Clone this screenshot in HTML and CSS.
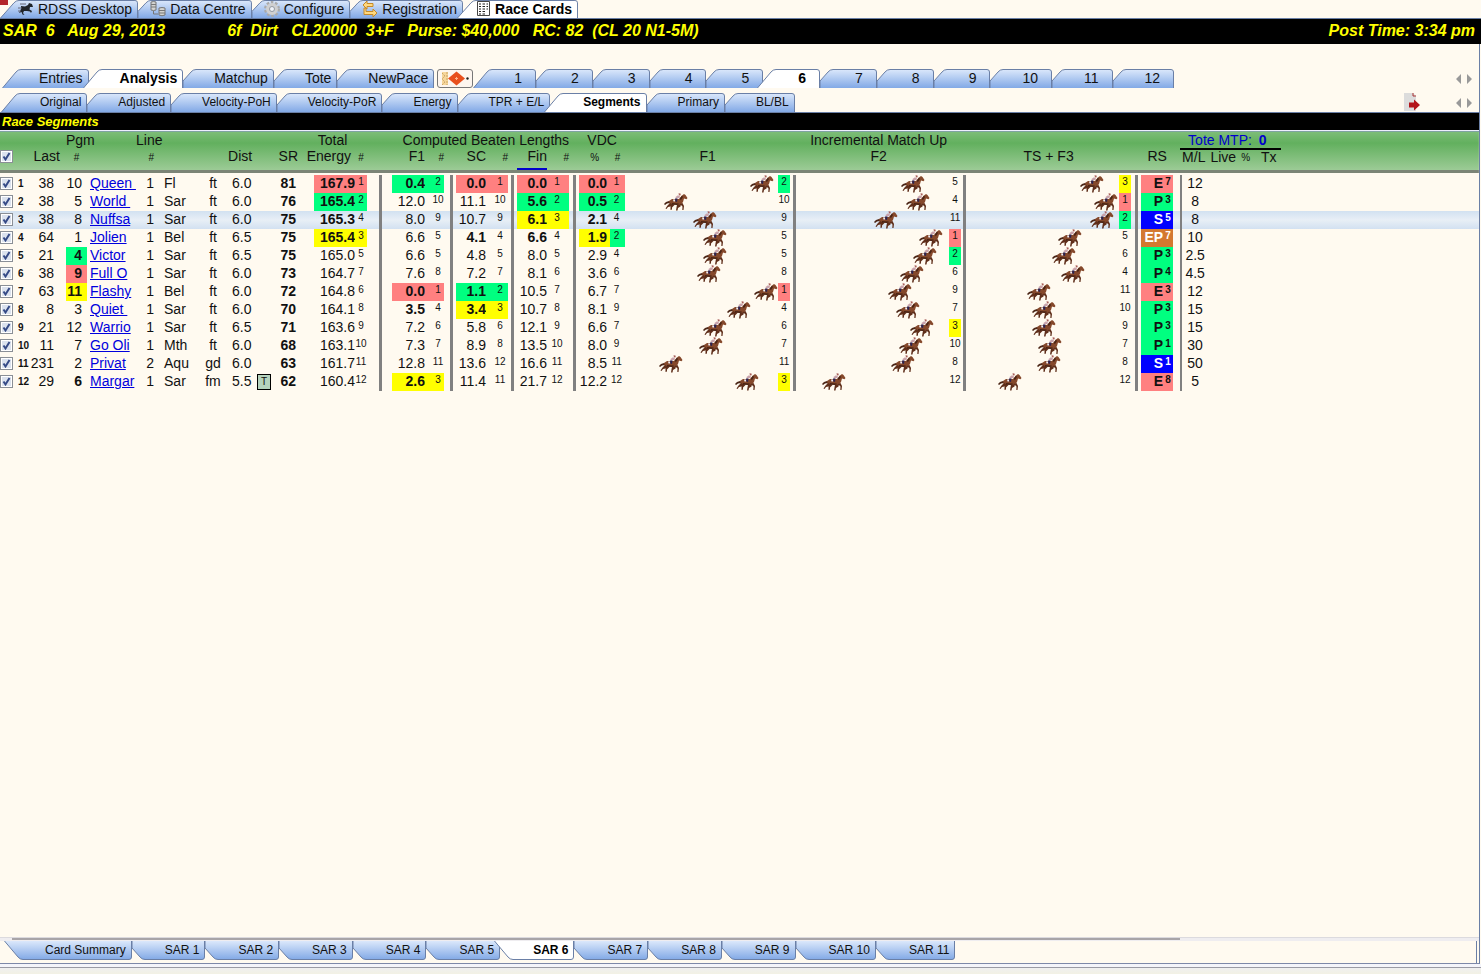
FILE: index.html
```html
<!DOCTYPE html>
<html lang="en">
<head>
  <meta charset="UTF-8" />
  <meta name="viewport" content="width=device-width, initial-scale=1.0"/>
  <title>RDSS - Race Cards</title>
  <link rel="stylesheet" href="styles.css">
</head>
<body>

  <svg class="defs" aria-hidden="true">
    <symbol id="horse" viewBox="0 0 24 18">
      <path d="M0 11 L2 9 L5 8 L7 8 L6 10 L3 10.500 L1 12Z" fill="#4a2415"/>
      <path d="M5 8 L8 6 L15 6 L18 2.500 L20 1 L21.500 2 L23.500 5 L22.500 6.300 L20 5.500 L19 9 L17 11.500 L14 12 L10 11.500 L6 12.500Z" fill="#85482b"/>
      <path d="M6 10 L9 11.500 L6.500 13.500 L4 14 L2.500 16 L1.500 15.500 L3.500 12.500Z M8 11 L11 11.500 L8 14.500 L8 16.500 L6.500 17 L6.500 14Z" fill="#5f2e1a"/>
      <path d="M13 11.500 L17 11 L16.500 13.500 L14 15 L13.500 17.500 L12 17.500 L12.500 14.500Z M16 11 L18.500 10 L20 13 L19.500 17 L18.300 17 L18.500 13.500Z" fill="#5f2e1a"/>
      <path d="M18 2.500 L15.500 6 L17 7 L19 4Z M8 10 L15 10.500 L13 12 L8 11.500Z" fill="#4a2415"/>
      <path d="M11.500 4 L14 2.200 L16 3.500 L15.500 5 L13 5.200 L12 6Z" fill="#c9a3ab"/>
      <path d="M14.500 .3 L16.500 .5 L16.700 2.300 L15 2.500Z" fill="#a9605c"/>
      <path d="M9 6.500 H11 V8.500 H9.500Z" fill="#eeeef8"/>
      <path d="M11 5.500 L13.500 5.500 L13 9 L11.500 8.500Z" fill="#2b2352"/>
    </symbol>
  </svg>

  <div class="frame">
    <nav class="tabs app-tabs">
      <span class="app-mark"></span>
      <button class="tab first">
        <svg width="16" height="16" viewBox="0 0 16 16"><path d="M3 5 L7 5.500 L10 4 L11 2 L14 3 L15 6 L12 6 L11.500 8.500 L14 10 L13 12 L12 10.500 L9 10 L6 10 L5 12 L6.500 14 L4.500 13.500 L3.500 11 L1 12 L3 8Z" fill="#20242a"/><path d="M2 3 H8 M0 7 H4 M0 10 H3" stroke="#667" fill="none"/></svg>
        RDSS Desktop
      </button>
      <button class="tab">
        <svg width="16" height="16" viewBox="0 0 16 16"><path d="M1 1 Q3.500 0 6 1 V9 Q3.500 10 1 9Z M9 7 Q12 6 15 7 V14 Q12 15.500 9 14Z" fill="#d4d4d0" stroke="#777"/><path d="M1 3.500 H6 M1 6 H6 M9 9.500 H15 M9 12 H15 M3.500 10 V13 H8" stroke="#777" fill="none"/></svg>
        Data Centre
      </button>
      <button class="tab">
        <svg width="16" height="16" viewBox="0 0 16 16"><circle cx="8" cy="8" r="6.500" fill="none" stroke="#aaa" stroke-width="3" stroke-dasharray="2.500 1.600"/><circle cx="8" cy="8" r="4.500" fill="none" stroke="#d0d0d0" stroke-width="3"/><circle cx="8" cy="8" r="2.500" fill="#eef3fb" stroke="#999"/></svg>
        Configure
      </button>
      <button class="tab">
        <svg width="16" height="16" viewBox="0 0 16 16"><path d="M1 4 L5 0 V2.500 H11 V5.500 H5 V8Z M15 12 L11 8 V10.500 H4 V7 H2 V13.500 H11 V16Z" fill="#ffd980" stroke="#c58a2a"/></svg>
        Registration
      </button>
      <button class="tab active">
        <svg width="16" height="16" viewBox="0 0 16 16"><path d="M2.500 .5 H14.500 V14.500 H2.500Z" fill="#fff" stroke="#444"/><path d="M4 3 H6 M7.500 3 H10 M11.500 3 H13 M4 5.500 H6 M7.500 5.500 H10 M11.500 5.500 H13 M4 8 H6 M7.500 8 H10 M11.500 8 H13 M4 10.500 H6 M7.500 10.500 H10 M4 13 H6 M7.500 13 H10" stroke="#222" stroke-width="1.200"/></svg>
        Race Cards
      </button>
    </nav>

    <header class="race-bar">
      <span>SAR  6   Aug 29, 2013</span>
      <span class="conditions">6f  Dirt   CL20000  3+F   Purse: $40,000   RC: 82  (CL 20 N1-5M)</span>
      <span class="post">Post Time: 3:34 pm</span>
    </header>

    <main class="card">
      <nav class="tabs race-tabs">
        <button class="tab first">Entries</button>
        <button class="tab active">Analysis</button>
        <button class="tab">Matchup</button>
        <button class="tab">Tote</button>
        <button class="tab">NewPace</button>
        <button class="tool" aria-label="Track bias">
          <svg width="33" height="17" viewBox="0 0 33 17"><path d="M3 2 H9 V15 H3Z" fill="#f6d69a"/><path d="M3 3 L6 6 L3 9 L6 12 L3 15 M8 2 V15" stroke="#c9a366" fill="none" stroke-dasharray="2 1"/><path d="M9 8.500 L17.500 1.500 L26 8.500 L17.500 15.500Z" fill="#e8501e"/><path d="M17.500 7 V10 M16 8.500 H19" stroke="#ffb08a"/><circle cx="28.500" cy="8.500" r="1.200" fill="#222"/></svg>
        </button>
        <button class="tab num first">1</button>
        <button class="tab num">2</button>
        <button class="tab num">3</button>
        <button class="tab num">4</button>
        <button class="tab num">5</button>
        <button class="tab num active">6</button>
        <button class="tab num">7</button>
        <button class="tab num">8</button>
        <button class="tab num">9</button>
        <button class="tab num two">10</button>
        <button class="tab num two">11</button>
        <button class="tab num two">12</button>
        <span class="pager">
          <svg width="16" height="10" viewBox="0 0 16 10"><path d="M5 0 V10 L0 5Z M11 0 V10 L16 5Z" fill="#999"/></svg>
        </span>
      </nav>

      <nav class="tabs view-tabs">
        <button class="tab first">Original</button>
        <button class="tab">Adjusted</button>
        <button class="tab">Velocity-PoH</button>
        <button class="tab">Velocity-PoR</button>
        <button class="tab">Energy</button>
        <button class="tab">TPR + E/L</button>
        <button class="tab active">Segments</button>
        <button class="tab">Primary</button>
        <button class="tab">BL/BL</button>
        <span class="pager">
          <svg width="17" height="19" viewBox="0 0 17 19"><path d="M0 0 H9 L12 3 V18 H0Z" fill="#dcdcdc"/><path d="M9 0 V3 H12" fill="none" stroke="#a33"/><path d="M5 9.500 H10 V6.500 L16 12 L10 17.500 V14.500 H5Z" fill="#b3151b"/></svg>
          <svg width="16" height="10" viewBox="0 0 16 10"><path d="M5 0 V10 L0 5Z M11 0 V10 L16 5Z" fill="#999"/></svg>
        </span>
      </nav>

      <h1>Race Segments</h1>

      <div class="sheet">
        <table>
          <colgroup>
            <col class="w16"><col class="w14"><col class="w24"><col class="w12">
            <col class="w21"><col class="w49"><col class="w18"><col class="w50">
            <col class="w18"><col class="w34"><col class="w16"><col class="w26"><col class="w16">
            <col class="w41"><col class="w12"><col class="w25">
            <col class="w33"><col class="w19"><col class="w12">
            <col class="w30"><col class="w22"><col class="w9">
            <col class="w30"><col class="w22"><col class="w10">
            <col class="w31"><col class="w15">
            <col class="track"><col class="w12"><col class="w6">
            <col class="track"><col class="w12"><col class="w5">
            <col class="track"><col class="w12"><col class="w10">
            <col class="w22"><col class="w10"><col class="w9">
            <col class="w26"><col>
          </colgroup>
          <thead>
            <tr>
              <th colspan="4"></th>
              <th colspan="2" class="left">Pgm</th>
              <th colspan="2" class="left">Line</th>
              <th colspan="4"></th>
              <th colspan="3">Total</th>
              <th colspan="9" class="right">Computed Beaten Lengths</th>
              <th></th>
              <th colspan="2">VDC</th>
              <th colspan="3"></th>
              <th colspan="2">Incremental Match Up</th>
              <th colspan="4"></th>
              <th colspan="2"></th>
              <th colspan="3" rowspan="2" class="tote">
                <div class="mtp">Tote MTP: <b>0</b></div>
                <div class="odds"><span>M/L</span><span>Live</span><small>%</small><span>Tx</span></div>
              </th>
            </tr>
            <tr>
              <th class="left"><input type="checkbox" aria-label="Select all" checked></th>
              <th colspan="3" class="right last">Last</th>
              <th><small>#</small></th>
              <th></th>
              <th class="right"><small>#</small></th>
              <th colspan="2"></th>
              <th colspan="2" class="left dist">Dist</th>
              <th class="right">SR</th>
              <th colspan="2" class="right energy">Energy</th>
              <th><small>#</small></th>
              <th></th>
              <th class="right">F1</th>
              <th class="right"><small>#</small></th>
              <th></th>
              <th class="right">SC</th>
              <th class="right"><small>#</small></th>
              <th></th>
              <th class="right sorted">Fin</th>
              <th class="right"><small>#</small></th>
              <th></th>
              <th><small>%</small></th>
              <th><small>#</small></th>
              <th colspan="2">F1</th>
              <th></th>
              <th colspan="2">F2</th>
              <th></th>
              <th colspan="2">TS + F3</th>
              <th></th>
              <th colspan="2">RS</th>
            </tr>
          </thead>
          <tbody id="rows"></tbody>
        </table>
      </div>

      <div class="scroll"><span></span></div>

      <nav class="tabs card-tabs">
        <button class="tab first">Card Summary</button>
        <button class="tab">SAR 1</button>
        <button class="tab">SAR 2</button>
        <button class="tab">SAR 3</button>
        <button class="tab">SAR 4</button>
        <button class="tab">SAR 5</button>
        <button class="tab active">SAR 6</button>
        <button class="tab">SAR 7</button>
        <button class="tab">SAR 8</button>
        <button class="tab">SAR 9</button>
        <button class="tab">SAR 10</button>
        <button class="tab">SAR 11</button>
      </nav>
    </main>
  </div>
  <footer></footer>

  <script src="script.js"></script>
</body>
</html>
```
FILE: styles.css
```css
* {
  box-sizing: border-box;
}

body {
  margin: 0;
  min-height: 100vh;
  display: flex;
  flex-direction: column;
  background: #fffaf0;
  font-family: "Liberation Sans", Arial, sans-serif;
  font-size: 14px;
  color: #111;
}

.defs {
  display: none;
}

.frame {
  flex: 1;
  display: flex;
  flex-direction: column;
}

/* tabs */
.tabs {
  display: flex;
  height: 19px;
}

.tab {
  height: 19px;
  margin: 0;
  padding: 0 2px 0 17px;
  background: none;
  border: solid transparent;
  border-width: 0 4px 0 14px;
  border-image: url("data:image/svg+xml,%3Csvg xmlns='http://www.w3.org/2000/svg' width='30' height='19'%3E%3ClinearGradient id='g' x2='0' y2='1'%3E%3Cstop stop-color='%23dbe8fb'/%3E%3Cstop offset='1' stop-color='%2382a9e6'/%3E%3C/linearGradient%3E%3Cpath d='M0 19V12L8 3Q10 .5 13 .5H27Q29.500 .5 29.500 3V19' fill='url(%23g)' stroke='%236a7fa6'/%3E%3C/svg%3E") 0 4 0 14 fill;
  font: inherit;
  line-height: 19px;
  color: #111;
  white-space: nowrap;
  cursor: pointer;
}

.tab.first {
  border-left-width: 20px;
  border-image: url("data:image/svg+xml,%3Csvg xmlns='http://www.w3.org/2000/svg' width='36' height='19'%3E%3ClinearGradient id='g' x2='0' y2='1'%3E%3Cstop stop-color='%23dbe8fb'/%3E%3Cstop offset='1' stop-color='%2382a9e6'/%3E%3C/linearGradient%3E%3Cpath d='M.5 19L14 3Q16 .5 19 .5H33Q35.500 .5 35.500 3V19' fill='url(%23g)' stroke='%236a7fa6'/%3E%3C/svg%3E") 0 4 0 20 fill;
}

.tab.active {
  margin-left: -6px;
  border-left-width: 20px;
  border-image: url("data:image/svg+xml,%3Csvg xmlns='http://www.w3.org/2000/svg' width='36' height='19'%3E%3Cpath d='M.5 19L14 3Q16 .5 19 .5H33Q35.500 .5 35.500 3V19' fill='white' stroke='%236a7fa6'/%3E%3C/svg%3E") 0 4 0 20 fill;
  font-weight: bold;
  color: #000;
  z-index: 1;
}

.app-tabs {
  border-bottom: 1px solid #6a7fa6;
  overflow: hidden;
}

.app-tabs .tab {
  display: flex;
  align-items: center;
  gap: 4px;
  height: 18px;
  padding: 0 2px 0 0;
  line-height: 17px;
}

.app-tabs .tab svg {
  flex: none;
  margin-left: -2px;
}

.app-mark {
  width: 8px;
  height: 5px;
  margin-right: -8px;
  background: #b3252b;
}

.race-bar {
  display: flex;
  height: 25px;
  padding: 0 6px 0 3px;
  background: #000;
  color: #ff0;
  font-size: 16px;
  font-weight: bold;
  font-style: italic;
  line-height: 23px;
  white-space: pre;
}

.conditions {
  margin-left: 62px;
}

.post {
  margin-left: auto;
}

.card {
  flex: 1;
  display: flex;
  flex-direction: column;
  padding-top: 25px;
  margin-right: 1px;
  border-right: 1px solid #6a7fa6;
  border-bottom: 1px solid #7d88a8;
}

.race-tabs {
  padding-left: 2px;
}

.tab.num {
  padding: 0 10px 0 21px;
}

.tab.two {
  padding-left: 18px;
}

.tool {
  width: 36px;
  height: 19px;
  margin: 0 0 0 3px;
  padding: 0;
  border: 1px solid #777;
  border-radius: 3px;
  background: #fdf6ef;
  line-height: 0;
}

.pager {
  display: flex;
  align-items: center;
  gap: 35px;
  margin-left: auto;
  padding-right: 7px;
}

.view-tabs {
  height: 20px;
  margin-top: 5px;
  padding-left: 1px;
  border-bottom: 1px solid #6a7fa6;
}

.view-tabs .tab {
  padding: 0 2px 0 17px;
  font-size: 12px;
}

.view-tabs .tab.first,
.view-tabs .tab.active {
  padding-left: 19px;
}

h1 {
  margin: 0;
  padding-left: 2px;
  background: #000;
  color: #ff0;
  font-size: 13px;
  font-style: italic;
  line-height: 17px;
  border-bottom: 1px solid #eef;
}

/* segment table */
.sheet {
  flex: 1;
  border-top: 1px solid #7fa3a0;
}

table {
  width: 100%;
  table-layout: fixed;
  border-spacing: 0;
}

.w5 { width: 5px; }
.w6 { width: 6px; }
.w9 { width: 9px; }
.w10 { width: 10px; }
.w12 { width: 12px; }
.w14 { width: 14px; }
.w15 { width: 15px; }
.w16 { width: 16px; }
.w18 { width: 18px; }
.w19 { width: 19px; }
.w21 { width: 21px; }
.w22 { width: 22px; }
.w24 { width: 24px; }
.w25 { width: 25px; }
.w26 { width: 26px; }
.w30 { width: 30px; }
.w31 { width: 31px; }
.w33 { width: 33px; }
.w34 { width: 34px; }
.w41 { width: 41px; }
.w49 { width: 49px; }
.w50 { width: 50px; }
.track { width: 153px; }

thead {
  background: linear-gradient(#7dbd78 0, #62b05e 11px, #9ccb96 38px, #7b8476 38px, #7b8476 41px, transparent 41px);
}

th {
  height: 16px;
  padding: 0;
  font-weight: normal;
  line-height: 16px;
  vertical-align: top;
  white-space: nowrap;
}

thead tr + tr th {
  height: 27px;
}

td {
  position: relative;
  height: 18px;
  padding: 0;
  line-height: 17px;
  white-space: nowrap;
  vertical-align: top;
}

small {
  font-size: 10px;
}

.left {
  text-align: left;
}

.right {
  text-align: right;
}

.center {
  text-align: center;
}

th.last {
  padding-right: 6px;
}

th.dist {
  padding-left: 6px;
}

th.energy {
  padding-right: 4px;
}

th.sorted {
  background: linear-gradient(#00c, #00c) no-repeat 0 20px / 100% 2px;
}

th.tote {
  padding-left: 7px;
  text-align: left;
}

.mtp {
  width: 101px;
  padding-left: 8px;
  border-bottom: 2px solid #000;
  color: #00c;
  line-height: 16px;
}

.mtp b {
  margin-left: 3px;
}

.odds {
  display: flex;
  gap: 5px;
  padding-left: 2px;
  line-height: 15px;
}

.odds span:last-child {
  margin-left: 6px;
}

input[type="checkbox"] {
  display: block;
  appearance: none;
  width: 13px;
  height: 13px;
  margin: 2px 0 0;
  border: 1px solid #8a8f96;
  background: #e3e7ee;
  box-shadow: inset 0 0 0 1px #fff;
}

input[type="checkbox"]:checked {
  background: #dbe2ee url("data:image/svg+xml,%3Csvg xmlns='http://www.w3.org/2000/svg' width='11' height='11'%3E%3Cpath d='M2.500 5.500L4.500 8.500L8.500 2' fill='none' stroke='%23354a86' stroke-width='2'/%3E%3C/svg%3E");
}

tr.current {
  background: linear-gradient(#d2e1f1, #e8eff6 50%, #d2e1f1);
}

.n {
  padding-left: 2px;
  font-size: 10px;
  font-weight: bold;
}

.pgm {
  padding-right: 5px;
}

.name {
  padding-left: 3px;
}

.name a {
  color: #00d;
  white-space: pre;
}

.trk, .dist {
  padding-left: 10px;
}

.sr {
  padding-right: 2px;
  font-weight: bold;
}

.turf {
  display: block;
  width: 14px;
  height: 16px;
  margin: 1px;
  border: 1px solid #000;
  background: #b5d3bd;
  font-size: 10px;
  line-height: 14px;
  text-align: center;
}

.rank {
  font-size: 10px;
  line-height: 14px;
  text-align: center;
}

.f1-rank {
  padding-left: 7px;
}

.sc-rank {
  padding-left: 6px;
}

.fin-rank {
  padding-right: 2px;
}

.vdc {
  padding-right: 3px;
}

.vdc-rank {
  padding-right: 2px;
}

.bar {
  background: linear-gradient(#808080, #808080) no-repeat right 3px top 0 / 3px 100%;
}

.bar.wide {
  background-position: right 10px top 0;
}

.bar.edge {
  background-position: right 0 top 0;
}

.bar.thin {
  background-position: right 0 top 0;
  background-size: 2px 100%;
}

.horse {
  position: absolute;
  top: 0;
  width: 24px;
  height: 18px;
}

.bold {
  font-weight: bold;
}

.red {
  background: #ff8080;
}

.green {
  background: #00ff80;
}

.yellow {
  background: #ff0;
}

.blue {
  background: #00f;
  color: #fff;
}

.orange {
  background: #d4782f;
  color: #fff;
}

.rs {
  font-weight: bold;
}

.rs-rank {
  font-weight: bold;
}

/* bottom strip */
.scroll {
  height: 4px;
  background: #efedf0;
  border-top: 1px solid #dcdade;
}

.scroll span {
  display: block;
  width: 79%;
  margin-left: 12px;
  height: 2px;
  background: #a8a4a8;
}

.card-tabs {
  height: 22px;
  padding-left: 4px;
  margin-right: 2px;
  border-right: 1px solid #6a7fa6;
}

.card-tabs .tab {
  padding: 0 2px 0 19px;
  font-size: 12px;
  line-height: 17px;
  border-image-source: url("data:image/svg+xml,%3Csvg xmlns='http://www.w3.org/2000/svg' width='30' height='19'%3E%3ClinearGradient id='g' x2='0' y2='1'%3E%3Cstop stop-color='%23dbe8fb'/%3E%3Cstop offset='1' stop-color='%2382a9e6'/%3E%3C/linearGradient%3E%3Cpath d='M0 0V7L8 16Q10 18.500 13 18.500H27Q29.500 18.500 29.500 16V0' fill='url(%23g)' stroke='%236a7fa6'/%3E%3C/svg%3E");
}

.card-tabs .tab.first {
  padding-left: 21px;
  border-image-source: url("data:image/svg+xml,%3Csvg xmlns='http://www.w3.org/2000/svg' width='36' height='19'%3E%3ClinearGradient id='g' x2='0' y2='1'%3E%3Cstop stop-color='%23dbe8fb'/%3E%3Cstop offset='1' stop-color='%2382a9e6'/%3E%3C/linearGradient%3E%3Cpath d='M.5 0L14 16Q16 18.500 19 18.500H33Q35.500 18.500 35.500 16V0' fill='url(%23g)' stroke='%236a7fa6'/%3E%3C/svg%3E");
}

.card-tabs .tab.active {
  border-image-source: url("data:image/svg+xml,%3Csvg xmlns='http://www.w3.org/2000/svg' width='36' height='19'%3E%3Cpath d='M.5 0L14 16Q16 18.500 19 18.500H33Q35.500 18.500 35.500 16V0' fill='white' stroke='%236a7fa6'/%3E%3C/svg%3E");
}

footer {
  height: 10px;
  background: linear-gradient(#f4f4fa 3px, #9a9aa4 3px, #9a9aa4 4px, #f0f0f0 4px, #f2f1e4);
}
```
FILE: script.js
```javascript
// horse x positions are pixels from the left of each match up column
const horses = [
  { last: 38, pgm: 10, name: 'Queen ', line: 1, trk: 'Fl', surf: 'ft', dist: '6.0', sr: 81, energy: ['167.9', 1], f1: ['0.4', 2], sc: ['0.0', 1], fin: ['0.0', 1], vdc: ['0.0', 1], run: [[125, 2], [105, 5], [114, 3]], rs: ['E', 7], ml: '12' },
  { last: 38, pgm: 5, name: 'World ', line: 1, trk: 'Sar', surf: 'ft', dist: '6.0', sr: 76, energy: ['165.4', 2], f1: ['12.0', 10], sc: ['11.1', 10], fin: ['5.6', 2], vdc: ['0.5', 2], run: [[39, 10], [110, 4], [128, 1]], rs: ['P', 3], ml: '8' },
  { last: 38, pgm: 8, name: 'Nuffsa', line: 1, trk: 'Sar', surf: 'ft', dist: '6.0', sr: 75, energy: ['165.3', 4], f1: ['8.0', 9], sc: ['10.7', 9], fin: ['6.1', 3], vdc: ['2.1', 4], run: [[68, 9], [78, 11], [124, 2]], rs: ['S', 5], ml: '8', current: true },
  { last: 64, pgm: 1, name: 'Jolien', line: 1, trk: 'Bel', surf: 'ft', dist: '6.5', sr: 75, energy: ['165.4', 3], f1: ['6.6', 5], sc: ['4.1', 4], fin: ['6.6', 4], vdc: ['1.9', 2, 'yellow bold'], run: [[78, 5], [123, 1], [92, 5]], rs: ['EP', 7], ml: '10' },
  { last: 21, pgm: 4, pick: 'green bold', name: 'Victor', line: 1, trk: 'Sar', surf: 'ft', dist: '6.5', sr: 75, energy: ['165.0', 5], f1: ['6.6', 5], sc: ['4.8', 5], fin: ['8.0', 5], vdc: ['2.9', 4, 'plain'], run: [[78, 5], [117, 2], [86, 6]], rs: ['P', 3], ml: '2.5' },
  { last: 38, pgm: 9, pick: 'red bold', name: 'Full O', line: 1, trk: 'Sar', surf: 'ft', dist: '6.0', sr: 73, energy: ['164.7', 7], f1: ['7.6', 8], sc: ['7.2', 7], fin: ['8.1', 6], vdc: ['3.6', 6], run: [[72, 8], [104, 6], [95, 4]], rs: ['P', 4], ml: '4.5' },
  { last: 63, pgm: 11, pick: 'yellow bold', name: 'Flashy', line: 1, trk: 'Bel', surf: 'ft', dist: '6.0', sr: 72, energy: ['164.8', 6], f1: ['0.0', 1], sc: ['1.1', 2], fin: ['10.5', 7], vdc: ['6.7', 7], run: [[129, 1], [92, 9], [61, 11]], rs: ['E', 3], ml: '12' },
  { last: 8, pgm: 3, name: 'Quiet ', line: 1, trk: 'Sar', surf: 'ft', dist: '6.0', sr: 70, energy: ['164.1', 8], f1: ['3.5', 4], sc: ['3.4', 3], fin: ['10.7', 8], vdc: ['8.1', 9], run: [[102, 4], [100, 7], [66, 10]], rs: ['P', 3], ml: '15' },
  { last: 21, pgm: 12, name: 'Warrio', line: 1, trk: 'Sar', surf: 'ft', dist: '6.5', sr: 71, energy: ['163.6', 9], f1: ['7.2', 6], sc: ['5.8', 6], fin: ['12.1', 9], vdc: ['6.6', 7], run: [[78, 6], [114, 3], [66, 9]], rs: ['P', 3], ml: '15' },
  { last: 11, pgm: 7, name: 'Go Oli', line: 1, trk: 'Mth', surf: 'ft', dist: '6.0', sr: 68, energy: ['163.1', 10], f1: ['7.3', 7], sc: ['8.9', 8], fin: ['13.5', 10], vdc: ['8.0', 9], run: [[74, 7], [103, 10], [72, 7]], rs: ['P', 1], ml: '30' },
  { last: 231, pgm: 2, name: 'Privat', line: 2, trk: 'Aqu', surf: 'gd', dist: '6.0', sr: 63, energy: ['161.7', 11], f1: ['12.8', 11], sc: ['13.6', 12], fin: ['16.6', 11], vdc: ['8.5', 11], run: [[34, 11], [95, 8], [71, 8]], rs: ['S', 1], ml: '50' },
  { last: 29, pgm: 6, pick: 'bold', name: 'Margar', line: 1, trk: 'Sar', surf: 'fm', dist: '5.5', turf: true, sr: 62, energy: ['160.4', 12], f1: ['2.6', 3], sc: ['11.4', 11], fin: ['21.7', 12], vdc: ['12.2', 12], run: [[110, 3], [26, 12], [32, 12]], rs: ['E', 8], ml: '5' }
];

const colors = { 1: 'red', 2: 'green', 3: 'yellow' };
const styles = { E: 'red', P: 'green', S: 'blue', EP: 'orange' };

function figure(key, [value, rank, cls]) {
  const color = colors[rank] || '';
  const look = cls || color + (rank <= 4 ? ' bold' : '');
  return `<td class="right ${key} ${look}">${value}</td><td class="rank ${key}-rank ${color}">${rank}</td>`;
}

function run([x, rank]) {
  return `<td><svg class="horse" style="left: ${x}px"><use href="#horse"/></svg></td>
    <td class="rank ${colors[rank] || ''}">${rank}</td>`;
}

document.getElementById('rows').innerHTML = horses.map((h, i) => `
  <tr class="${h.current ? 'current' : ''}">
    <td><input type="checkbox" aria-label="Select ${h.name.trim()}" checked></td>
    <td class="n">${i + 1}</td>
    <td class="right">${h.last}</td>
    <td></td>
    <td class="right pgm ${h.pick || ''}">${h.pgm}</td>
    <td class="name"><a href="#">${h.name}</a></td>
    <td class="right">${h.line}</td>
    <td class="trk">${h.trk}</td>
    <td class="center">${h.surf}</td>
    <td class="dist">${h.dist}</td>
    <td>${h.turf ? '<span class="turf">T</span>' : ''}</td>
    <td class="right sr">${h.sr}</td>
    <td></td>
    ${figure('energy', h.energy)}
    <td class="bar wide"></td>
    ${figure('f1', h.f1)}
    <td class="bar"></td>
    ${figure('sc', h.sc)}
    <td class="bar"></td>
    ${figure('fin', h.fin)}
    <td class="bar"></td>
    ${figure('vdc', h.vdc)}
    ${run(h.run[0])}
    <td class="bar edge"></td>
    ${run(h.run[1])}
    <td class="bar edge"></td>
    ${run(h.run[2])}
    <td class="bar"></td>
    <td class="right rs ${styles[h.rs[0]]}">${h.rs[0]}</td>
    <td class="rank rs-rank ${styles[h.rs[0]]}">${h.rs[1]}</td>
    <td class="bar thin"></td>
    <td class="center">${h.ml}</td>
    <td></td>
  </tr>`).join('');
```
